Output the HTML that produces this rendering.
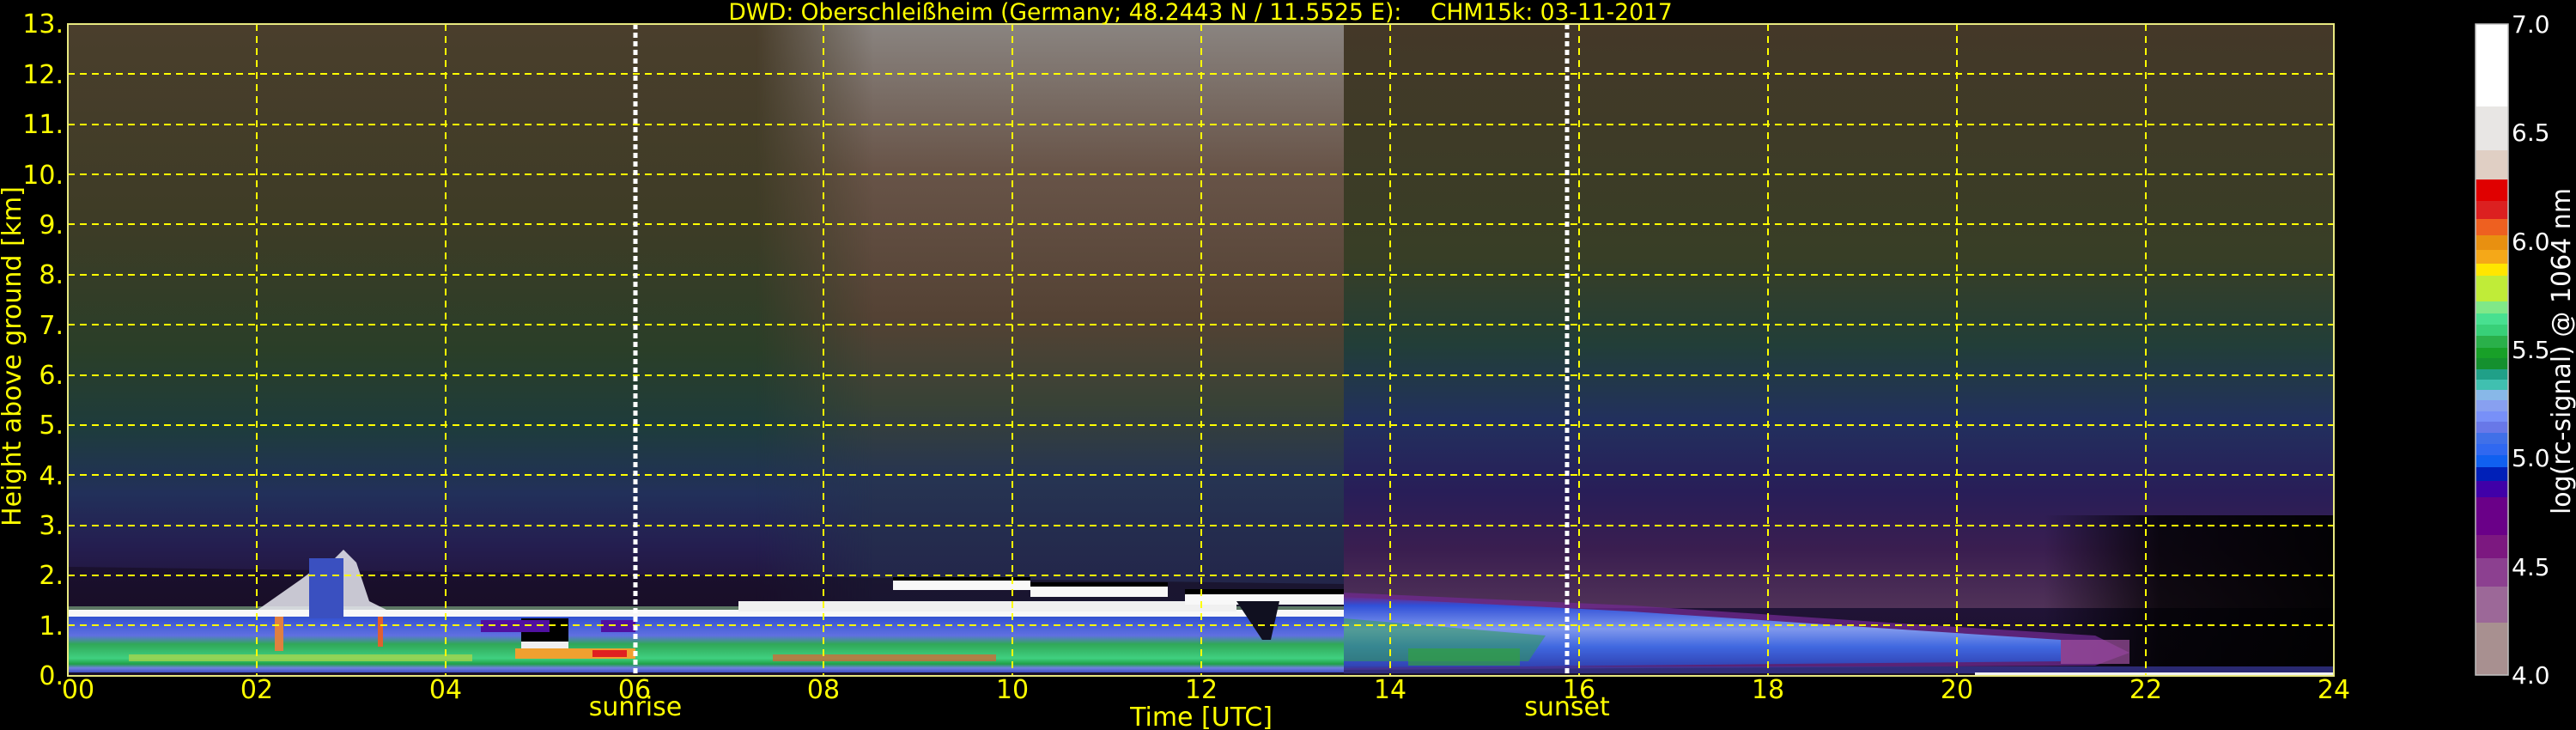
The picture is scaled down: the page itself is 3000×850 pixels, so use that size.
<!DOCTYPE html>
<html><head><meta charset="utf-8"><style>
html,body{margin:0;padding:0;background:#000;width:3000px;height:850px;overflow:hidden}
svg{display:block}
text{font-family:"DejaVu Sans","Liberation Sans",sans-serif}
</style></head><body>
<svg width="3000" height="850" viewBox="0 0 3000 850" xmlns="http://www.w3.org/2000/svg">
<defs>
<linearGradient id="bg" x1="0" y1="0" x2="0" y2="1">
<stop offset="0" stop-color="#4a3e2c"/>
<stop offset="0.3" stop-color="#3e3c26"/>
<stop offset="0.5" stop-color="#2a3e28"/>
<stop offset="0.62" stop-color="#1e3c3c"/>
<stop offset="0.72" stop-color="#22305a"/>
<stop offset="0.8" stop-color="#241e50"/>
<stop offset="0.87" stop-color="#22143a"/>
<stop offset="1" stop-color="#1a1028"/>
</linearGradient>
<linearGradient id="mid" x1="0" y1="0" x2="0" y2="1">
<stop offset="0" stop-color="#8a8480"/>
<stop offset="0.25" stop-color="#685448"/>
<stop offset="0.5" stop-color="#544234"/>
<stop offset="0.65" stop-color="#384236"/>
<stop offset="0.78" stop-color="#263452"/>
<stop offset="1" stop-color="#222248"/>
</linearGradient>
<linearGradient id="midfade" x1="0" y1="0" x2="1" y2="0">
<stop offset="0" stop-color="#fff" stop-opacity="0"/>
<stop offset="0.2" stop-color="#fff" stop-opacity="1"/>
<stop offset="1" stop-color="#fff" stop-opacity="1"/>
</linearGradient>
<mask id="mm"><rect x="880" y="28" width="685" height="680" fill="url(#midfade)"/></mask>
<linearGradient id="aft" x1="0" y1="0" x2="0" y2="1">
<stop offset="0" stop-color="#443828"/>
<stop offset="0.4" stop-color="#383e26"/>
<stop offset="0.55" stop-color="#223e38"/>
<stop offset="0.68" stop-color="#22305e"/>
<stop offset="0.8" stop-color="#281e58"/>
<stop offset="0.9" stop-color="#3a1e50"/>
<stop offset="1" stop-color="#503258"/>
</linearGradient>
<linearGradient id="pbl" x1="0" y1="0" x2="0" y2="1">
<stop offset="0" stop-color="#3050d0"/>
<stop offset="0.35" stop-color="#6070e0"/>
<stop offset="0.5" stop-color="#30a858"/>
<stop offset="0.75" stop-color="#40d080"/>
<stop offset="0.85" stop-color="#20a048"/>
<stop offset="0.92" stop-color="#7080e0"/>
<stop offset="1" stop-color="#4050c0"/>
</linearGradient>
<linearGradient id="eve" x1="0" y1="0" x2="0" y2="1">
<stop offset="0" stop-color="#6a2a8a"/>
<stop offset="0.12" stop-color="#3050d8"/>
<stop offset="0.45" stop-color="#8098ec"/>
<stop offset="0.7" stop-color="#4068e0"/>
<stop offset="1" stop-color="#3040b0"/>
</linearGradient>
<linearGradient id="late" x1="0" y1="0" x2="1" y2="0">
<stop offset="0" stop-color="#000" stop-opacity="0"/>
<stop offset="0.4" stop-color="#000" stop-opacity="0.8"/>
<stop offset="1" stop-color="#000" stop-opacity="0.95"/>
</linearGradient>
</defs>

<rect x="79" y="28" width="2639" height="759" fill="url(#bg)"/>
<rect x="880" y="28" width="685" height="680" fill="url(#mid)" mask="url(#mm)"/>
<rect x="1565" y="28" width="1153" height="680" fill="url(#aft)"/>
<rect x="2380" y="600" width="338" height="187" fill="url(#late)"/>

<polygon points="79,660 1565,680 1565,720 79,720" fill="#140c20" opacity="0.6"/>
<rect x="79" y="717" width="1486" height="66" fill="url(#pbl)"/>
<rect x="79" y="710" width="1486" height="8" fill="#f8f8f8"/>
<rect x="79" y="706" width="1486" height="4" fill="#a0e0a0" opacity="0.5"/>
<path d="M300,710 L350,675 L370,660 L390,650 L400,640 L415,655 L430,700 L450,710Z" fill="#e8e8f0" opacity="0.85"/>
<rect x="360" y="650" width="40" height="70" fill="#3a50c0"/>
<rect x="320" y="718" width="10" height="40" fill="#e08040"/>
<rect x="440" y="718" width="6" height="35" fill="#e06030"/>
<rect x="607" y="720" width="55" height="32" fill="#000"/>
<rect x="607" y="747" width="55" height="10" fill="#f0f0f0"/>
<rect x="600" y="755" width="140" height="12" fill="#f0a030"/>
<rect x="690" y="757" width="40" height="8" fill="#e02020"/>
<rect x="560" y="722" width="80" height="14" fill="#5010a0"/>
<rect x="700" y="722" width="40" height="14" fill="#5010a0"/>
<rect x="860" y="700" width="580" height="12" fill="#f0f0f0"/>
<rect x="1040" y="675" width="160" height="12" fill="#f8f8f8"/>
<rect x="1040" y="672" width="160" height="4" fill="#000"/>
<rect x="1200" y="683" width="160" height="12" fill="#f8f8f8"/>
<rect x="1200" y="678" width="160" height="5" fill="#000"/>
<rect x="1380" y="692" width="185" height="12" fill="#f8f8f8"/>
<rect x="1380" y="686" width="185" height="6" fill="#000"/>
<path d="M1440,700 L1470,745 L1480,745 L1490,700Z" fill="#101020"/>
<rect x="150" y="762" width="400" height="8" fill="#c8d840" opacity="0.6"/>
<rect x="900" y="762" width="260" height="8" fill="#e06030" opacity="0.7"/>

<polygon points="1565,690 1900,705 2200,725 2440,740 2480,760 2440,775 1565,780" fill="#702a90" opacity="0.75"/>
<polygon points="1565,695 1900,712 2200,732 2400,745 2400,770 1565,778" fill="url(#eve)"/>
<polygon points="1565,720 1800,740 1780,770 1565,770" fill="#30a050" opacity="0.55"/>
<rect x="1640" y="755" width="130" height="20" fill="#30a040" opacity="0.7"/>
<rect x="2400" y="745" width="80" height="28" fill="#a050a0" opacity="0.7"/>
<rect x="1565" y="776" width="1153" height="8" fill="#3a3aa0" opacity="0.7"/>
<rect x="2300" y="783" width="418" height="4" fill="#f0f0f0"/>

<g stroke="#ffff00" stroke-width="2" stroke-dasharray="8,6">
<line x1="79" y1="86" x2="2718" y2="86"/><line x1="79" y1="145" x2="2718" y2="145"/>
<line x1="79" y1="203" x2="2718" y2="203"/><line x1="79" y1="261" x2="2718" y2="261"/>
<line x1="79" y1="320" x2="2718" y2="320"/><line x1="79" y1="378" x2="2718" y2="378"/>
<line x1="79" y1="437" x2="2718" y2="437"/><line x1="79" y1="495" x2="2718" y2="495"/>
<line x1="79" y1="553" x2="2718" y2="553"/><line x1="79" y1="612" x2="2718" y2="612"/>
<line x1="79" y1="670" x2="2718" y2="670"/><line x1="79" y1="728" x2="2718" y2="728"/>
<line x1="299" y1="28" x2="299" y2="787"/><line x1="519" y1="28" x2="519" y2="787"/>
<line x1="959" y1="28" x2="959" y2="787"/><line x1="1179" y1="28" x2="1179" y2="787"/>
<line x1="1399" y1="28" x2="1399" y2="787"/><line x1="1619" y1="28" x2="1619" y2="787"/>
<line x1="1839" y1="28" x2="1839" y2="787"/><line x1="2059" y1="28" x2="2059" y2="787"/>
<line x1="2279" y1="28" x2="2279" y2="787"/><line x1="2499" y1="28" x2="2499" y2="787"/>
</g>
<g stroke="#ffffff" stroke-width="5" stroke-dasharray="6,4">
<line x1="740" y1="28" x2="740" y2="787"/><line x1="1825" y1="28" x2="1825" y2="787"/>
</g>
<rect x="79" y="28" width="2639" height="759" fill="none" stroke="#e8e880" stroke-width="2"/>

<g fill="#ffff00" font-size="30" text-anchor="end">
<text x="74" y="38">13.</text><text x="74" y="97">12.</text><text x="74" y="155">11.</text>
<text x="74" y="214">10.</text><text x="74" y="272">9.</text><text x="74" y="330">8.</text>
<text x="74" y="389">7.</text><text x="74" y="447">6.</text><text x="74" y="505">5.</text>
<text x="74" y="564">4.</text><text x="74" y="622">3.</text><text x="74" y="680">2.</text>
<text x="74" y="739">1.</text><text x="74" y="797">0.</text>
</g>
<g fill="#ffff00" font-size="30" text-anchor="middle">
<text x="91" y="813">00</text><text x="299" y="813">02</text><text x="519" y="813">04</text>
<text x="739" y="813">06</text><text x="959" y="813">08</text><text x="1179" y="813">10</text>
<text x="1399" y="813">12</text><text x="1619" y="813">14</text><text x="1839" y="813">16</text>
<text x="2059" y="813">18</text><text x="2279" y="813">20</text><text x="2499" y="813">22</text>
<text x="2718" y="813">24</text>
<text x="740" y="833">sunrise</text><text x="1825" y="833">sunset</text>
<text x="1399" y="845">Time [UTC]</text>
<text x="1398" y="23" font-size="26.5" xml:space="preserve">DWD: Oberschleißheim (Germany; 48.2443 N / 11.5525 E):    CHM15k: 03-11-2017</text>
<text transform="translate(24,415) rotate(-90)">Height above ground [km]</text>
</g>

<g>
<rect x="2883" y="28" width="38" height="96" fill="#ffffff"/>
<rect x="2883" y="124" width="38" height="51" fill="#e8e6e4"/>
<rect x="2883" y="175" width="38" height="34" fill="#e0cfc4"/>
<rect x="2883" y="209" width="38" height="25" fill="#e00000"/>
<rect x="2883" y="234" width="38" height="21" fill="#dc2020"/>
<rect x="2883" y="255" width="38" height="19" fill="#ee6020"/>
<rect x="2883" y="274" width="38" height="17" fill="#e89010"/>
<rect x="2883" y="291" width="38" height="16" fill="#f5a818"/>
<rect x="2883" y="307" width="38" height="14" fill="#ffe600"/>
<rect x="2883" y="321" width="38" height="30" fill="#c0ec38"/>
<rect x="2883" y="351" width="38" height="14" fill="#80e888"/>
<rect x="2883" y="365" width="38" height="13" fill="#48e090"/>
<rect x="2883" y="378" width="38" height="13" fill="#38d078"/>
<rect x="2883" y="391" width="38" height="14" fill="#2ab04a"/>
<rect x="2883" y="405" width="38" height="12" fill="#18a028"/>
<rect x="2883" y="417" width="38" height="13" fill="#14902e"/>
<rect x="2883" y="430" width="38" height="12" fill="#20a088"/>
<rect x="2883" y="442" width="38" height="12" fill="#40c0b0"/>
<rect x="2883" y="454" width="38" height="12" fill="#88b8e8"/>
<rect x="2883" y="466" width="38" height="13" fill="#88a0f0"/>
<rect x="2883" y="479" width="38" height="12" fill="#7890f8"/>
<rect x="2883" y="491" width="38" height="13" fill="#6878e8"/>
<rect x="2883" y="504" width="38" height="13" fill="#4070e8"/>
<rect x="2883" y="517" width="38" height="13" fill="#3068f0"/>
<rect x="2883" y="530" width="38" height="14" fill="#1060f0"/>
<rect x="2883" y="544" width="38" height="16" fill="#0020b8"/>
<rect x="2883" y="560" width="38" height="19" fill="#4000a8"/>
<rect x="2883" y="579" width="38" height="44" fill="#6a0088"/>
<rect x="2883" y="623" width="38" height="27" fill="#7c1880"/>
<rect x="2883" y="650" width="38" height="33" fill="#8c4090"/>
<rect x="2883" y="683" width="38" height="42" fill="#9c6898"/>
<rect x="2883" y="725" width="38" height="61" fill="#a89090"/>
<rect x="2883" y="28" width="38" height="758" fill="none" stroke="#c0c0c0" stroke-width="1.5"/>
</g>
<g fill="#ffffff" font-size="28">
<text x="2925" y="38">7.0</text><text x="2925" y="164">6.5</text><text x="2925" y="291">6.0</text>
<text x="2925" y="417">5.5</text><text x="2925" y="543">5.0</text><text x="2925" y="670">4.5</text>
<text x="2925" y="796">4.0</text>
<text transform="translate(2993,409) rotate(-90)" text-anchor="middle" font-size="30">log(rc-signal) @ 1064 nm</text>
</g>
</svg>
</body></html>
